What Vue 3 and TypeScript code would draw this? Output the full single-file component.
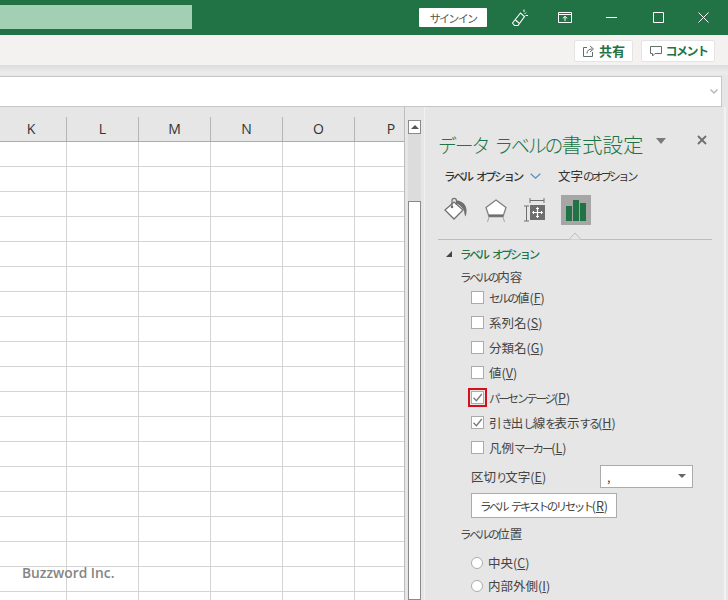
<script setup lang="ts">
import { h } from 'vue'
import type { FunctionalComponent } from 'vue'

interface CheckRow {
  label: string
  key: string
  checked?: boolean
  marked?: boolean
}

// かなだけ詰めて組む (Meiryo UI の字幅に合わせる)
const Jp: FunctionalComponent<{ text: string }> = ({ text }) =>
  (text.match(/[ぁ-んァ-ヶー ]+|[^ぁ-んァ-ヶー ]+/g) || []).map((run) =>
    /^[ぁ-んァ-ヶー ]/.test(run) ? h('span', { class: 'kana' }, run) : h('span', run),
  )

const columns = ['K', 'L', 'M', 'N', 'O', 'P']
const rowCount = 19

const contentRows: CheckRow[] = [
  { label: 'セルの値', key: 'F' },
  { label: '系列名', key: 'S' },
  { label: '分類名', key: 'G' },
  { label: '値', key: 'V' },
  { label: 'パーセンテージ', key: 'P', checked: true, marked: true },
  { label: '引き出し線を表示する', key: 'H', checked: true },
  { label: '凡例マーカー', key: 'L' },
]

const positionRows = [
  { label: '中央', key: 'C' },
  { label: '内部外側', key: 'I' },
]
</script>

<template>
  <div class="app">
    <!-- タイトルバー -->
    <header class="titlebar">
      <div class="doc-title"></div>
      <button class="signin"><Jp text="サインイン" /></button>
      <svg class="tb-icon coauth" viewBox="0 0 18 18" width="18" height="18">
        <path d="M1.500 14 9.500 4l4 3.500-6.500 9H3.500z M4.500 11l3.500 3" fill="none" stroke="#fff" stroke-width="1.100" />
        <path d="M13 .5v2.500M15 3.500l-1.500 1.500M17 6.500h-2.500" fill="none" stroke="#fff" stroke-width="1" />
      </svg>
      <svg class="tb-icon display" viewBox="0 0 14 11" width="14" height="11">
        <path d="M.5.5h13v10H.5zM.5 2.5h13M7 9V4.500M4.800 6.400 7 4.300l2.200 2.100" fill="none" stroke="#fff" />
      </svg>
      <svg class="tb-icon min" viewBox="0 0 11 11" width="11" height="11"><path d="M0 5.500h11" stroke="#fff" /></svg>
      <svg class="tb-icon max" viewBox="0 0 11 11" width="11" height="11"><path d="M.5.5h10v10H.5z" fill="none" stroke="#fff" /></svg>
      <svg class="tb-icon close" viewBox="0 0 11 11" width="11" height="11"><path d="M.5.5l10 10M10.500.5l-10 10" stroke="#fff" /></svg>
    </header>

    <!-- 共有 / コメント -->
    <div class="toolbar">
      <button class="tool-btn share">
        <svg viewBox="0 0 14 14" width="14" height="14">
          <path d="M5 3.500H1.500v9h9V8M5 9.500c0-3 2-4.500 5-4.500M8 2l3.500 3L8 8" fill="none" stroke="#5f6f68" />
        </svg>
        共有
      </button>
      <button class="tool-btn comment">
        <svg viewBox="0 0 14 14" width="14" height="14">
          <path d="M1.500 2.500h11v7H6l-2.500 2.500v-2.500h-2z" fill="none" stroke="#5f6f68" />
        </svg>
        <span><Jp text="コメント" /></span>
      </button>
    </div>

    <!-- 数式バー -->
    <div class="formula-zone">
      <div class="formula-bar">
        <svg viewBox="0 0 8 5" width="8" height="5"><path d="M.5.5 4 4 7.500.5" fill="none" stroke="#b5b5b5" stroke-width="1.400" /></svg>
      </div>
    </div>

    <main class="workspace">
      <!-- シート -->
      <section class="sheet">
        <div class="col-head">
          <div v-for="col in columns" :key="col" class="col-label">{{ col }}</div>
        </div>
        <div class="grid">
          <div v-for="r in rowCount" :key="r" class="grid-row">
            <div v-for="col in columns" :key="col" class="cell"></div>
          </div>
        </div>
        <span class="watermark">Buzzword Inc.</span>
      </section>

      <!-- スクロールバー -->
      <div class="scrollbar">
        <div class="scroll-up"><i></i></div>
        <div class="scroll-track"></div>
        <div class="scroll-thumb"></div>
      </div>

      <!-- 書式設定パネル -->
      <aside class="panel">
        <div class="panel-head">
          <h2><Jp text="データ ラベルの書式設定" /></h2>
          <i class="head-caret"></i>
          <svg class="panel-close" viewBox="0 0 10 10" width="10" height="10">
            <path d="M1 1l8 8M9 1 1 9" stroke="#6e6e6e" stroke-width="1.800" />
          </svg>
        </div>

        <div class="tabs">
          <span class="tab active"><Jp text="ラベル オプション" /></span>
          <svg class="tab-chevron" viewBox="0 0 11 6" width="11" height="6">
            <path d="M.7.7l4.800 4.400L10.300.7" fill="none" stroke="#4a90c8" stroke-width="1.200" />
          </svg>
          <span class="tab"><Jp text="文字のオプション" /></span>
        </div>

        <div class="icons">
          <svg class="icon fill" viewBox="0 0 26 26" width="26" height="26">
            <path d="M2 13 11 5l9 8-9 9z" fill="#fff" stroke="#707070" stroke-width="1.300" />
            <path d="M9 9V3.500a2.200 2.200 0 0 1 4.400 0V8" fill="none" stroke="#707070" stroke-width="1.200" />
            <circle cx="9" cy="10" r="1.300" fill="#707070" />
            <path d="M14 3.500c5 .5 9 4 9.500 9 .2 2.500-.2 5-1 7-1-1.500-1.200-4-1.500-6-1-2.500-4-5-7-7z" fill="#6e6e6e" />
          </svg>
          <svg class="icon shape" viewBox="0 0 24 26" width="24" height="26">
            <path d="M12 3 22 10.500 19 19.500H5L2 10.500z" fill="#fff" stroke="#808080" stroke-width="1.300" />
            <path d="M5 18.500h14" stroke="#6e6e6e" stroke-width="2.200" />
            <path d="M5 20 3.500 25M19 20l1.500 5" stroke="#a8a8a8" stroke-width="1" fill="none" />
          </svg>
          <svg class="icon size" viewBox="0 0 24 26" width="24" height="26">
            <path d="M7 3.500h14M7 1v5M21 1v5M1 9h5M1 24h5M3.500 9v15" fill="none" stroke="#707070" stroke-width="1" />
            <rect x="7" y="8" width="15" height="15" fill="#6e6e6e" />
            <path d="M14.500 10.500v10M9.500 15.500h10" stroke="#fff" stroke-width="1.200" />
            <path d="M13 12l1.500-1.500L16 12M13 19l1.500 1.500L16 19M11 14l-1.500 1.500L11 17M18 14l1.500 1.500L18 17" fill="none" stroke="#fff" />
          </svg>
          <div class="icon-selected">
            <svg viewBox="0 0 20 21" width="20" height="21">
              <rect x="0" y="6" width="6" height="15" fill="#217346" />
              <rect x="7" y="0" width="6" height="21" fill="#217346" />
              <rect x="14" y="3" width="6" height="18" fill="#217346" />
            </svg>
          </div>
        </div>

        <div class="divider">
          <svg class="notch" viewBox="0 0 14 8" width="14" height="8">
            <path d="M0 7.500h1L7 1l6 6.500h1" fill="#e6e6e6" stroke="#bdbdbd" />
          </svg>
        </div>

        <div class="section-title"><i class="section-caret"></i><Jp text="ラベル オプション" /></div>
        <div class="sub-title first"><Jp text="ラベルの内容" /></div>

        <label v-for="row in contentRows" :key="row.key" class="check-row">
          <span class="check" :class="{ marked: row.marked }">
            <svg v-if="row.checked" viewBox="0 0 11 11" width="11" height="11">
              <path d="M1.500 5.800 4.400 8.700 9.800 2" fill="none" stroke="#777" stroke-width="1.300" />
            </svg>
          </span>
          <span><Jp :text="row.label" />(<u>{{ row.key }}</u>)</span>
        </label>

        <div class="sep-row">
          <span class="sep-label"><Jp text="区切り文字" />(<u>E</u>)</span>
          <div class="select">
            <span>,</span>
            <i class="select-caret"></i>
          </div>
        </div>

        <button class="reset"><Jp text="ラベル テキストのリセット" />(<u>R</u>)</button>

        <div class="sub-title pos"><Jp text="ラベルの位置" /></div>

        <label v-for="row in positionRows" :key="row.key" class="radio-row">
          <span class="radio"></span>
          <span><Jp :text="row.label" />(<u>{{ row.key }}</u>)</span>
        </label>
      </aside>
    </main>
  </div>
</template>

<style>
html,
body {
  margin: 0;
  overflow: hidden;
}
.kana {
  font-size: 0.92em;
  letter-spacing: var(--kana, -2.2px);
  word-spacing: 4px;
}
</style>

<style scoped>
.app {
  width: 728px;
  height: 600px;
  overflow: hidden;
  display: flex;
  flex-direction: column;
  background: #e6e6e6;
  font-family: 'Noto Sans CJK JP', 'Liberation Sans', sans-serif;
  font-size: 12.5px;
  color: #444;
}

/* タイトルバー */
.titlebar {
  height: 35px;
  flex: none;
  display: flex;
  align-items: center;
  background: #217346;
}
.doc-title {
  width: 192px;
  height: 24px;
  margin-top: -1px;
  background: #a3cfb4;
}
.signin {
  width: 68px;
  height: 19px;
  margin-left: 227px;
  padding: 0;
  border: 0;
  border-radius: 1px;
  background: #fff;
  color: #555;
  font: 12px 'Noto Sans CJK JP', sans-serif;
  --kana: -1.7px;
}
.tb-icon {
  flex: none;
}
.coauth {
  margin-left: 24px;
}
.display {
  margin-left: 29px;
}
.min {
  margin-left: 34px;
}
.max {
  margin-left: 36px;
}
.close {
  margin-left: 34px;
}

/* ツールバー */
.toolbar {
  height: 30px;
  flex: none;
  display: flex;
  align-items: center;
  justify-content: flex-end;
  gap: 8px;
  padding-right: 13px;
  box-sizing: border-box;
  background: #f3f2f1;
}
.tool-btn {
  height: 22px;
  margin-top: 1px;
  padding: 0;
  display: flex;
  align-items: center;
  justify-content: center;
  gap: 3px;
  border: 1px solid #e6e4e2;
  border-radius: 2px;
  background: #fff;
  color: #217346;
  font: bold 13px 'Noto Sans CJK JP', sans-serif;
  --kana: -1.5px;
}
.share {
  width: 59px;
}
.comment {
  width: 74px;
}

/* 数式バー */
.formula-zone {
  height: 42px;
  flex: none;
  padding-top: 11px;
  box-sizing: border-box;
  background: linear-gradient(#dcdcdc, #ececec 8px, #e6e6e6 11px);
}
.formula-bar {
  width: 722px;
  height: 31px;
  box-sizing: border-box;
  display: flex;
  align-items: center;
  justify-content: flex-end;
  padding-right: 3px;
  border: 1px solid #c6c6c6;
  border-left: 0;
  background: #fff;
}

.workspace {
  flex: 1;
  min-height: 0;
  display: flex;
}

/* シート */
.sheet {
  position: relative;
  width: 404px;
  flex: none;
  overflow: hidden;
  background: #fff;
}
.col-head {
  height: 35px;
  box-sizing: border-box;
  display: flex;
  padding-top: 10px;
  border-bottom: 1px solid #ababab;
  background: #e6e6e6;
}
.col-label {
  width: 72px;
  flex: none;
  box-sizing: border-box;
  border-right: 1px solid #b5b5b5;
  text-align: center;
  line-height: 23px;
  font-family: 'Open Sans', 'Liberation Sans', sans-serif;
  font-size: 14px;
  color: #333;
}
.col-label:first-child {
  width: 67px;
  padding-right: 4px;
}
.col-label:last-child {
  border-right: 0;
}
.grid-row {
  height: 25px;
  box-sizing: border-box;
  display: flex;
  border-bottom: 1px solid #d4d4d4;
}
.cell {
  width: 72px;
  flex: none;
  box-sizing: border-box;
  border-right: 1px solid #d4d4d4;
}
.cell:first-child {
  width: 67px;
}
.watermark {
  position: absolute;
  left: 22px;
  top: 456px;
  font: 600 13.8px 'Open Sans', sans-serif;
  color: #858585;
}

/* スクロールバー */
.scrollbar {
  width: 21px;
  flex: none;
  box-sizing: border-box;
  display: flex;
  flex-direction: column;
  padding: 13px 3px 0;
  border-left: 1px solid #bdbdbd;
  border-right: 1px solid #f2f2f2;
}
.scroll-up {
  height: 14px;
  flex: none;
  box-sizing: border-box;
  display: flex;
  align-items: center;
  justify-content: center;
  border: 1px solid #8a8a8a;
  background: #fff;
}
.scroll-up i {
  border: 4px solid transparent;
  border-top: 0;
  border-bottom: 4px solid #555;
}
.scroll-track {
  height: 67px;
  flex: none;
  background: #dcdcdc;
}
.scroll-thumb {
  flex: 1;
  border: 1px solid #8a8a8a;
  background: #fff;
}

/* パネル */
.panel {
  width: 301px;
  flex: none;
  box-sizing: border-box;
  padding-left: 13px;
  border-right: 2px solid #f2f2f2;
  background: #e6e6e6;
  overflow: hidden;
}
.panel-head {
  height: 34px;
  margin-top: 20px;
  display: flex;
  align-items: center;
}
.panel-head h2 {
  margin: 0;
  width: 218px;
  flex: none;
  font-size: 20.5px;
  font-weight: 300;
  line-height: 34px;
  white-space: nowrap;
  color: #217346;
  --kana: -2.1px;
}
.head-caret {
  margin: -6px 0 0 0;
  border: 5px solid transparent;
  border-bottom: 0;
  border-top: 6px solid #7a7a7a;
}
.panel-close {
  margin: -8px 0 0 31px;
}
.tabs {
  height: 20px;
  margin-top: 4px;
  padding-left: 6px;
  display: flex;
  align-items: center;
}
.tab {
  white-space: nowrap;
  color: #333;
  --kana: -2.7px;
}
.tab.active {
  font-weight: 500;
  --kana: -2.3px;
}
.tab-chevron {
  margin: 1px 17px 0 8px;
}
.icons {
  height: 30px;
  margin-top: 10px;
  position: relative;
  display: flex;
  align-items: center;
}
.icon {
  flex: none;
}
.fill {
  margin-left: 5px;
}
.shape {
  margin-left: 15px;
}
.size {
  margin-left: 15px;
}
.icon-selected {
  width: 30px;
  height: 30px;
  margin-left: 14px;
  display: flex;
  align-items: center;
  justify-content: center;
  background: #a6a6a6;
}
.divider {
  position: relative;
  width: 274px;
  height: 0;
  margin-top: 14px;
  border-top: 1px solid #bdbdbd;
}
.notch {
  position: absolute;
  left: 130px;
  top: -8px;
}
.section-title {
  height: 20px;
  margin-top: 4px;
  padding-left: 8px;
  display: flex;
  align-items: center;
  font-weight: 500;
  color: #217346;
  --kana: -2.3px;
}
.section-caret {
  width: 0;
  height: 0;
  margin-right: 8px;
  border-left: 6px solid transparent;
  border-bottom: 6px solid #444;
}
.sub-title {
  padding-left: 22px;
  height: 20px;
  line-height: 20px;
  color: #444;
}
.sub-title.first {
  margin-top: 3px;
  margin-bottom: -2px;
}
.check-row {
  height: 25px;
  padding-left: 33px;
  display: flex;
  align-items: center;
  gap: 5px;
}
.check {
  position: relative;
  width: 11px;
  height: 11px;
  flex: none;
  display: flex;
  align-items: center;
  justify-content: center;
  border: 1px solid #ababab;
  background: #fff;
}
.check.marked::after {
  content: '';
  position: absolute;
  inset: -4px;
  border: 2px solid #d5101c;
}
.sep-row {
  height: 22px;
  margin-top: 5px;
  padding-left: 33px;
  display: flex;
  align-items: center;
}
.sep-label {
  width: 129px;
  flex: none;
}
.select {
  width: 93px;
  height: 23px;
  box-sizing: border-box;
  display: flex;
  align-items: center;
  justify-content: space-between;
  padding: 0 6px;
  border: 1px solid #ababab;
  background: #fff;
}
.select-caret {
  border: 4px solid transparent;
  border-bottom: 0;
  border-top: 4px solid #666;
}
.reset {
  display: block;
  width: 146px;
  height: 25px;
  margin: 6px 0 0 33px;
  padding: 0;
  border: 1px solid #ababab;
  background: #fff;
  color: #444;
  font: 12.5px 'Noto Sans CJK JP', sans-serif;
  white-space: nowrap;
  --kana: -2.5px;
}
.sub-title.pos {
  margin-top: 6px;
  margin-bottom: 7px;
}
.radio-row {
  height: 23px;
  padding-left: 33px;
  display: flex;
  align-items: center;
  gap: 5px;
}
.radio {
  width: 10px;
  height: 10px;
  flex: none;
  border: 1px solid #ababab;
  border-radius: 50%;
  background: #fff;
}
</style>
